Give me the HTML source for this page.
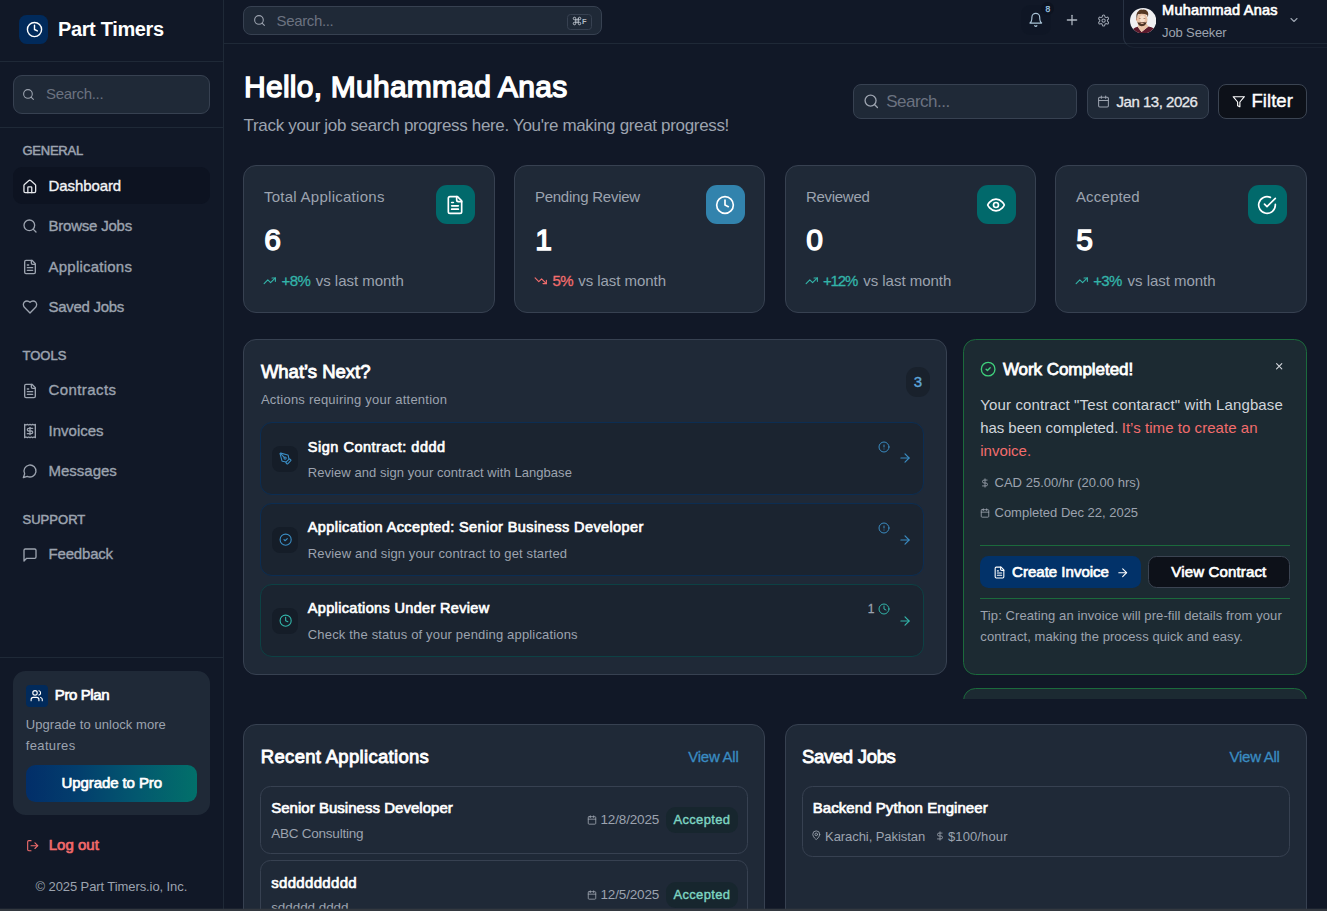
<!DOCTYPE html>
<html>
<head>
<meta charset="utf-8">
<title>Part Timers</title>
<style>
*{box-sizing:border-box;margin:0;padding:0}
html,body{width:1327px;height:911px;overflow:hidden;background:#111827;font-family:"Liberation Sans",sans-serif;color:#fff}
.abs{position:absolute}
.t{position:absolute;white-space:nowrap;line-height:1}
svg{display:block;position:absolute;fill:none;stroke:currentColor;stroke-width:2;stroke-linecap:round;stroke-linejoin:round}
#side{position:absolute;left:0;top:0;width:224px;height:911px;background:#111827;border-right:1px solid #1f2937}
.hr{position:absolute;height:1px;background:#1f2937}
.sec{position:absolute;left:23px;font-size:13px;font-weight:700;color:#9ca3af;letter-spacing:.4px;line-height:1;white-space:nowrap}
.nav{position:absolute;left:48px;font-size:15px;color:#9ca3af;line-height:1;white-space:nowrap;-webkit-text-stroke:.3px #9ca3af}
.nav.act{color:#f3f4f6;-webkit-text-stroke:.3px #f3f4f6}
.ni{left:23px;width:15px;height:15px;color:#9ca3af}
.inp{position:absolute;background:#1f2937;border:1px solid #374151;border-radius:8px}
.ph{position:absolute;color:#6b7280;white-space:nowrap;line-height:1}
.card{position:absolute;background:#1f2937;border:1px solid #374151;border-radius:13px}
#top{position:absolute;left:0;top:0;width:1327px;height:0}
#topline{position:absolute;left:224px;top:43px;width:1103px;height:1px;background:#1f2937}
/*CSS_MORE*/
</style>
</head>
<body>
<svg width="0" height="0" style="position:absolute"><defs>
<symbol id="i-clock" viewBox="0 0 24 24"><circle cx="12" cy="12" r="10"/><polyline points="12 6 12 12 16 14"/></symbol>
<symbol id="i-search" viewBox="0 0 24 24"><circle cx="11" cy="11" r="8"/><path d="m21 21-4.3-4.3"/></symbol>
<symbol id="i-home" viewBox="0 0 24 24"><path d="M15 21v-8a1 1 0 0 0-1-1h-4a1 1 0 0 0-1 1v8"/><path d="M3 10a2 2 0 0 1 .709-1.528l7-5.999a2 2 0 0 1 2.582 0l7 5.999A2 2 0 0 1 21 10v9a2 2 0 0 1-2 2H5a2 2 0 0 1-2-2z"/></symbol>
<symbol id="i-file" viewBox="0 0 24 24"><path d="M15 2H6a2 2 0 0 0-2 2v16a2 2 0 0 0 2 2h12a2 2 0 0 0 2-2V7Z"/><path d="M14 2v4a2 2 0 0 0 2 2h4"/><path d="M10 9H8"/><path d="M16 13H8"/><path d="M16 17H8"/></symbol>
<symbol id="i-heart" viewBox="0 0 24 24"><path d="M19 14c1.49-1.46 3-3.21 3-5.5A5.5 5.5 0 0 0 16.5 3c-1.76 0-3 .5-4.5 2-1.5-1.5-2.74-2-4.5-2A5.5 5.5 0 0 0 2 8.5c0 2.3 1.5 4.05 3 5.5l7 7Z"/></symbol>
<symbol id="i-receipt" viewBox="0 0 24 24"><path d="M4 2v20l2-1 2 1 2-1 2 1 2-1 2 1 2-1 2 1V2l-2 1-2-1-2 1-2-1-2 1-2-1-2 1Z"/><path d="M16 8h-6a2 2 0 1 0 0 4h4a2 2 0 1 1 0 4H8"/><path d="M12 17.5v-11"/></symbol>
<symbol id="i-msgc" viewBox="0 0 24 24"><path d="M7.9 20A9 9 0 1 0 4 16.1L2 22Z"/></symbol>
<symbol id="i-msgs" viewBox="0 0 24 24"><path d="M21 15a2 2 0 0 1-2 2H7l-4 4V5a2 2 0 0 1 2-2h14a2 2 0 0 1 2 2z"/></symbol>
<symbol id="i-users" viewBox="0 0 24 24"><path d="M16 21v-2a4 4 0 0 0-4-4H6a4 4 0 0 0-4 4v2"/><circle cx="9" cy="7" r="4"/><path d="M22 21v-2a4 4 0 0 0-3-3.87"/><path d="M16 3.13a4 4 0 0 1 0 7.75"/></symbol>
<symbol id="i-logout" viewBox="0 0 24 24"><path d="M9 21H5a2 2 0 0 1-2-2V5a2 2 0 0 1 2-2h4"/><polyline points="16 17 21 12 16 7"/><line x1="21" x2="9" y1="12" y2="12"/></symbol>
<symbol id="i-bell" viewBox="0 0 24 24"><path d="M6 8a6 6 0 0 1 12 0c0 7 3 9 3 9H3s3-2 3-9"/><path d="M10.3 21a1.94 1.94 0 0 0 3.4 0"/></symbol>
<symbol id="i-plus" viewBox="0 0 24 24"><path d="M5 12h14"/><path d="M12 5v14"/></symbol>
<symbol id="i-gear" viewBox="0 0 24 24"><path d="M12.22 2h-.44a2 2 0 0 0-2 2v.18a2 2 0 0 1-1 1.73l-.43.25a2 2 0 0 1-2 0l-.15-.08a2 2 0 0 0-2.73.73l-.22.38a2 2 0 0 0 .73 2.73l.15.1a2 2 0 0 1 1 1.72v.51a2 2 0 0 1-1 1.74l-.15.09a2 2 0 0 0-.73 2.73l.22.38a2 2 0 0 0 2.73.73l.15-.08a2 2 0 0 1 2 0l.43.25a2 2 0 0 1 1 1.73V20a2 2 0 0 0 2 2h.44a2 2 0 0 0 2-2v-.18a2 2 0 0 1 1-1.73l.43-.25a2 2 0 0 1 2 0l.15.08a2 2 0 0 0 2.73-.73l.22-.39a2 2 0 0 0-.73-2.73l-.15-.08a2 2 0 0 1-1-1.74v-.5a2 2 0 0 1 1-1.74l.15-.09a2 2 0 0 0 .73-2.73l-.22-.38a2 2 0 0 0-2.73-.73l-.15.08a2 2 0 0 1-2 0l-.43-.25a2 2 0 0 1-1-1.73V4a2 2 0 0 0-2-2z"/><circle cx="12" cy="12" r="3"/></symbol>
<symbol id="i-chev" viewBox="0 0 24 24"><path d="m6 9 6 6 6-6"/></symbol>
<symbol id="i-cal" viewBox="0 0 24 24"><path d="M8 2v4"/><path d="M16 2v4"/><rect width="18" height="18" x="3" y="4" rx="2"/><path d="M3 10h18"/></symbol>
<symbol id="i-filter" viewBox="0 0 24 24"><polygon points="22 3 2 3 10 12.46 10 19 14 21 14 12.46 22 3"/></symbol>
<symbol id="i-eye" viewBox="0 0 24 24"><path d="M2 12s3-7 10-7 10 7 10 7-3 7-10 7-10-7-10-7Z"/><circle cx="12" cy="12" r="3"/></symbol>
<symbol id="i-checkc" viewBox="0 0 24 24"><path d="M22 11.08V12a10 10 0 1 1-5.93-9.14"/><polyline points="22 4 12 14.01 9 11.01"/></symbol>
<symbol id="i-ccheck" viewBox="0 0 24 24"><circle cx="12" cy="12" r="10"/><path d="m9 12 2 2 4-4"/></symbol>
<symbol id="i-tup" viewBox="0 0 24 24"><polyline points="22 7 13.5 15.5 8.5 10.5 2 17"/><polyline points="16 7 22 7 22 13"/></symbol>
<symbol id="i-tdown" viewBox="0 0 24 24"><polyline points="22 17 13.5 8.5 8.5 13.5 2 7"/><polyline points="16 17 22 17 22 11"/></symbol>
<symbol id="i-pen" viewBox="0 0 24 24"><path d="M15.707 21.293a1 1 0 0 1-1.414 0l-1.586-1.586a1 1 0 0 1 0-1.414l5.586-5.586a1 1 0 0 1 1.414 0l1.586 1.586a1 1 0 0 1 0 1.414z"/><path d="m18 13-1.375-6.874a1 1 0 0 0-.746-.776L3.235 2.028a1 1 0 0 0-1.207 1.207L5.35 15.879a1 1 0 0 0 .776.746L13 18"/><path d="m2.3 2.3 7.286 7.286"/><circle cx="11" cy="11" r="2"/></symbol>
<symbol id="i-alert" viewBox="0 0 24 24"><circle cx="12" cy="12" r="10"/><line x1="12" x2="12" y1="8" y2="12"/><line x1="12" x2="12.01" y1="16" y2="16"/></symbol>
<symbol id="i-arrow" viewBox="0 0 24 24"><path d="M5 12h14"/><path d="m12 5 7 7-7 7"/></symbol>
<symbol id="i-x" viewBox="0 0 24 24"><path d="M18 6 6 18"/><path d="m6 6 12 12"/></symbol>
<symbol id="i-dollar" viewBox="0 0 24 24"><line x1="12" x2="12" y1="2" y2="22"/><path d="M17 5H9.5a3.5 3.5 0 0 0 0 7h5a3.5 3.5 0 0 1 0 7H6"/></symbol>
<symbol id="i-pin" viewBox="0 0 24 24"><path d="M20 10c0 6-8 12-8 12s-8-6-8-12a8 8 0 0 1 16 0Z"/><circle cx="12" cy="10" r="3"/></symbol>
<symbol id="i-cmd" viewBox="0 0 24 24"><path d="M15 6v12a3 3 0 1 0 3-3H6a3 3 0 1 0 3 3V6a3 3 0 1 0-3 3h12a3 3 0 1 0-3-3"/></symbol>
</defs></svg>
<div id="side">
<div class="abs" style="left:19px;top:15px;width:29px;height:29px;background:#012a5b;border-radius:7.5px;"></div>
<svg style="left:25.5px;top:20.5px;width:17px;height:17px;color:#fff;stroke-width:2;"><use href="#i-clock"/></svg>
<div class="t" style="left:57.9px;top:19px;font-size:20px;color:#fff;font-weight:700;letter-spacing:-0.34px;">Part Timers</div>
<div class="hr" style="left:0;top:61px;width:223px"></div>
<div class="inp" style="left:13px;top:75px;width:197px;height:38.6px;border-radius:9px"></div>
<svg style="left:22.0px;top:87.7px;width:13px;height:13px;color:#9ca3af;stroke-width:2;"><use href="#i-search"/></svg>
<div class="t" style="left:46px;top:86px;font-size:15px;color:#6b7280;letter-spacing:-0.31px;">Search...</div>
<div class="hr" style="left:0;top:127px;width:223px"></div>
<div class="t" style="left:22.5px;top:144px;font-size:13px;color:#9ca3af;letter-spacing:-0.25px;-webkit-text-stroke:0.5px #9ca3af;">GENERAL</div>
<div class="abs" style="left:13px;top:167px;width:197px;height:37px;background:#0d1321;border-radius:9px;"></div>
<svg style="left:22.2px;top:178.5px;width:15.6px;height:15.6px;color:#e5e7eb;stroke-width:2;"><use href="#i-home"/></svg>
<div class="t" style="left:48.5px;top:178px;font-size:15px;color:#f3f4f6;letter-spacing:-0.09px;-webkit-text-stroke:0.35px #f3f4f6;">Dashboard</div>
<svg style="left:22.0px;top:218.0px;width:16px;height:16px;color:#9ca3af;stroke-width:2;"><use href="#i-search"/></svg>
<div class="t" style="left:48.5px;top:218px;font-size:15px;color:#9ca3af;letter-spacing:-0.22px;-webkit-text-stroke:0.35px #9ca3af;">Browse Jobs</div>
<svg style="left:22.0px;top:259.0px;width:16px;height:16px;color:#9ca3af;stroke-width:2;"><use href="#i-file"/></svg>
<div class="t" style="left:48.5px;top:259px;font-size:15px;color:#9ca3af;letter-spacing:0.23px;-webkit-text-stroke:0.35px #9ca3af;">Applications</div>
<svg style="left:22.0px;top:299.0px;width:16px;height:16px;color:#9ca3af;stroke-width:2;"><use href="#i-heart"/></svg>
<div class="t" style="left:48.5px;top:299px;font-size:15px;color:#9ca3af;letter-spacing:-0.29px;-webkit-text-stroke:0.35px #9ca3af;">Saved Jobs</div>
<div class="t" style="left:22.5px;top:349px;font-size:13px;color:#9ca3af;letter-spacing:0.01px;-webkit-text-stroke:0.5px #9ca3af;">TOOLS</div>
<svg style="left:22.0px;top:382.8px;width:16px;height:16px;color:#9ca3af;stroke-width:2;"><use href="#i-file"/></svg>
<div class="t" style="left:48.5px;top:382px;font-size:15px;color:#9ca3af;letter-spacing:0.41px;-webkit-text-stroke:0.35px #9ca3af;">Contracts</div>
<svg style="left:22.0px;top:423.0px;width:16px;height:16px;color:#9ca3af;stroke-width:2;"><use href="#i-receipt"/></svg>
<div class="t" style="left:48.5px;top:423px;font-size:15px;color:#9ca3af;letter-spacing:0.01px;-webkit-text-stroke:0.35px #9ca3af;">Invoices</div>
<svg style="left:22.0px;top:463.0px;width:16px;height:16px;color:#9ca3af;stroke-width:2;"><use href="#i-msgc"/></svg>
<div class="t" style="left:48.5px;top:463px;font-size:15px;color:#9ca3af;-webkit-text-stroke:0.35px #9ca3af;">Messages</div>
<div class="t" style="left:22.5px;top:513px;font-size:13px;color:#9ca3af;letter-spacing:0.03px;-webkit-text-stroke:0.5px #9ca3af;">SUPPORT</div>
<svg style="left:22.0px;top:546.9px;width:16px;height:16px;color:#9ca3af;stroke-width:2;"><use href="#i-msgs"/></svg>
<div class="t" style="left:48.5px;top:546px;font-size:15px;color:#9ca3af;letter-spacing:-0.18px;-webkit-text-stroke:0.35px #9ca3af;">Feedback</div>
<div class="hr" style="left:0;top:657px;width:223px"></div>
<div class="abs" style="left:13px;top:671px;width:197px;height:144px;background:#1f2937;border-radius:12.5px;"></div>
<div class="abs" style="left:26px;top:685px;width:22.3px;height:22px;background:#012a5b;border-radius:4px;"></div>
<svg style="left:29.6px;top:689.0px;width:13.4px;height:13.4px;color:#fff;stroke-width:2;"><use href="#i-users"/></svg>
<div class="t" style="left:54.8px;top:687px;font-size:15px;color:#fff;letter-spacing:-0.39px;-webkit-text-stroke:0.69px #fff;">Pro Plan</div>
<div class="t" style="left:25.8px;top:718px;font-size:13px;color:#9ca3af;letter-spacing:0.06px;">Upgrade to unlock more</div>
<div class="t" style="left:25.8px;top:739px;font-size:13px;color:#9ca3af;letter-spacing:0.34px;">features</div>
<div class="abs" style="left:26px;top:765px;width:171px;height:37px;border-radius:9.5px;background:linear-gradient(90deg,#022e69 0%,#033e6d 30%,#03586f 65%,#02706a 100%);"></div>
<div class="t" style="left:61.5px;top:775px;font-size:15px;color:#fff;letter-spacing:-0.09px;-webkit-text-stroke:0.69px #fff;">Upgrade to Pro</div>
<svg style="left:25.8px;top:838.7px;width:13.4px;height:13.4px;color:#f26d6d;stroke-width:2;"><use href="#i-logout"/></svg>
<div class="t" style="left:48.7px;top:837px;font-size:15px;color:#f26a6a;letter-spacing:0.01px;-webkit-text-stroke:0.69px #f26a6a;">Log out</div>
<div class="t" style="left:35.5px;top:880px;font-size:13px;color:#9ca3af;letter-spacing:-0.09px;">© 2025 Part Timers.io, Inc.</div>
</div>
<div id="topline"></div>
<div id="top">
<div class="inp" style="left:243px;top:6px;width:359px;height:29px"></div>
<svg style="left:252.9px;top:13.9px;width:13px;height:13px;color:#9ca3af;stroke-width:2;"><use href="#i-search"/></svg>
<div class="t" style="left:276.6px;top:13px;font-size:15px;color:#6b7280;letter-spacing:-0.36px;">Search...</div>
<div class="abs" style="left:567.2px;top:14px;width:24.8px;height:16px;border:1px solid #374151;border-radius:3.5px;"></div>
<svg style="left:572.1px;top:16.1px;width:10px;height:10px;color:#c3cad3;stroke-width:2.2;"><use href="#i-cmd"/></svg>
<div class="t" style="left:582px;top:18px;font-size:7.5px;color:#b4bac3;font-weight:700;">F</div>
<div class="abs" style="left:1020.8px;top:4.6px;width:30.7px;height:30.2px;background:#0f1524;border-radius:9px;opacity:.55;"></div>
<svg style="left:1028.2px;top:12.2px;width:15.6px;height:15.6px;color:#a9c3d6;stroke-width:1.8;"><use href="#i-bell"/></svg>
<div class="abs" style="left:1041.3px;top:2.1px;width:13.2px;height:13.2px;background:#0d1320;border-radius:6.6px;"></div>
<div class="t" style="left:1045.5px;top:5px;font-size:8.5px;color:#a3cfe8;-webkit-text-stroke:0.25px #a3cfe8;">8</div>
<svg style="left:1064.1px;top:11.9px;width:16px;height:16px;color:#aeb6c1;stroke-width:1.9;"><use href="#i-plus"/></svg>
<svg style="left:1096.9px;top:13.7px;width:13.2px;height:13.2px;color:#9ca3af;stroke-width:1.9;"><use href="#i-gear"/></svg>
<div class="abs" style="left:1123px;top:-2px;width:210px;height:49.5px;border-left:1px solid #283243;border-bottom:1px solid #192130;border-bottom-left-radius:11px"></div>
<svg style="left:1129.8px;top:7.5px;width:26.3px;height:25.6px;stroke:none" viewBox="0 0 26 26" preserveAspectRatio="none"><defs><clipPath id="av"><circle cx="13" cy="13" r="13"/></clipPath></defs><g clip-path="url(#av)"><rect width="26" height="26" fill="#f0f0f2"/><path d="M2.5 27L3.4 21.2Q5 19.600 7.600 19L11.400 24.300L18.200 18.700Q21.500 19.400 23.600 20.800L25 27z" fill="#5c1a2c"/><path d="M7.600 19.100L8.300 16h8.200l1.700 2.700L11.400 24.400z" fill="#e8c3a6"/><ellipse cx="11.900" cy="11.900" rx="5.400" ry="6.600" fill="#e9c2a6"/><ellipse cx="12.300" cy="11" rx="2.600" ry="3.600" fill="#f6dfcc"/><path d="M6.500 11.200Q5.600 5.200 8.200 3.200Q9.600 1.200 12 1.700Q15.800 1 17.300 3.600Q18.600 5.200 17.600 9.500L17 7.200Q13 5.200 7.800 6.400Q7 8 6.900 11.200z" fill="#553722"/><path d="M7.400 13.600Q7.800 17.400 10.400 18.300Q12 18.700 14 18.100Q16.200 16.900 16.600 13.400Q15.600 15.200 14.400 14.600Q12 13.800 9.800 14.700Q8.200 15.200 7.400 13.600z" fill="#4b3426"/><ellipse cx="12" cy="15.600" rx="1.700" ry=".75" fill="#e2b49c"/><ellipse cx="9.700" cy="10.800" rx="1.100" ry=".5" fill="#8a5d49"/><ellipse cx="14.200" cy="10.800" rx="1.100" ry=".5" fill="#8a5d49"/><ellipse cx="6.500" cy="11.800" rx=".6" ry="1.100" fill="#c98a72"/></g></svg>
<div class="t" style="left:1162.1px;top:3px;font-size:14.5px;color:#fff;letter-spacing:0.21px;-webkit-text-stroke:0.67px #fff;">Muhammad Anas</div>
<div class="t" style="left:1162.1px;top:26px;font-size:13px;color:#9ca3af;letter-spacing:-0.14px;">Job Seeker</div>
<svg style="left:1288.4px;top:14.3px;width:12px;height:12px;color:#9ca3af;stroke-width:2.2;"><use href="#i-chev"/></svg>
</div>
<div id="main">
<div class="t" style="left:244.1px;top:72px;font-size:30px;color:#fff;letter-spacing:0.24px;-webkit-text-stroke:1.38px #fff;">Hello, Muhammad Anas</div>
<div class="t" style="left:243.6px;top:117px;font-size:17px;color:#9ca3af;letter-spacing:-0.33px;">Track your job search progress here. You're making great progress!</div>
<div class="inp" style="left:853px;top:84px;width:224px;height:35px"></div>
<svg style="left:862.95px;top:93.15px;width:16.5px;height:16.5px;color:#9ca3af;stroke-width:1.9;"><use href="#i-search"/></svg>
<div class="t" style="left:886.2px;top:93px;font-size:17px;color:#6b7280;letter-spacing:-0.5px;">Search...</div>
<div class="inp" style="left:1087px;top:84px;width:122px;height:35px"></div>
<svg style="left:1097.0px;top:94.7px;width:13px;height:13px;color:#9ca3af;stroke-width:1.9;"><use href="#i-cal"/></svg>
<div class="t" style="left:1116.5px;top:94px;font-size:15px;color:#e5e7eb;letter-spacing:-0.48px;-webkit-text-stroke:0.3px #e5e7eb;">Jan 13, 2026</div>
<div class="abs" style="left:1218px;top:84px;width:89px;height:35px;background:#0d1119;border:1px solid #3b4452;border-radius:8px;"></div>
<svg style="left:1231.65px;top:94.65px;width:13.5px;height:13.5px;color:#fff;stroke-width:2;"><use href="#i-filter"/></svg>
<div class="t" style="left:1251.5px;top:92px;font-size:18.5px;color:#fff;letter-spacing:0.05px;-webkit-text-stroke:0.4px #fff;">Filter</div>
<div class="card" style="left:243px;top:165px;width:252px;height:148px"></div>
<div class="t" style="left:263.9px;top:189px;font-size:15px;color:#9ca3af;letter-spacing:0.27px;">Total Applications</div>
<div class="t" style="left:264.3px;top:225px;font-size:30px;color:#fff;letter-spacing:-0.19px;-webkit-text-stroke:1.38px #fff;">6</div>
<svg style="left:262.95px;top:273.95px;width:13.5px;height:13.5px;color:#33b4a9;stroke-width:2;"><use href="#i-tup"/></svg>
<div class="t" style="left:281.5px;top:273px;font-size:15px;color:#33b4a9;letter-spacing:-0.61px;-webkit-text-stroke:0.3px #33b4a9;">+8%</div>
<div class="t" style="left:315.8px;top:273px;font-size:15px;color:#9ca3af;letter-spacing:-0.03px;">vs last month</div>
<div class="abs" style="left:436.1px;top:185px;width:38.6px;height:39px;background:#01696b;border-radius:11px;"></div>
<svg style="left:445.4px;top:194.6px;width:20px;height:20px;color:#fff;stroke-width:2;"><use href="#i-file"/></svg>
<div class="card" style="left:514px;top:165px;width:251px;height:148px"></div>
<div class="t" style="left:534.9px;top:189px;font-size:15px;color:#9ca3af;letter-spacing:-0.24px;">Pending Review</div>
<div class="t" style="left:535.3px;top:225px;font-size:30px;color:#fff;letter-spacing:-6.19px;-webkit-text-stroke:1.38px #fff;">1</div>
<svg style="left:533.95px;top:273.95px;width:13.5px;height:13.5px;color:#f26d6d;stroke-width:2;"><use href="#i-tdown"/></svg>
<div class="t" style="left:552.5px;top:273px;font-size:15px;color:#f26d6d;letter-spacing:-0.69px;-webkit-text-stroke:0.3px #f26d6d;">5%</div>
<div class="t" style="left:578.2px;top:273px;font-size:15px;color:#9ca3af;letter-spacing:-0.04px;">vs last month</div>
<div class="abs" style="left:706.1px;top:185px;width:38.6px;height:39px;background:#3283ad;border-radius:11px;"></div>
<svg style="left:715.4px;top:194.6px;width:20px;height:20px;color:#fff;stroke-width:2;"><use href="#i-clock"/></svg>
<div class="card" style="left:785px;top:165px;width:251px;height:148px"></div>
<div class="t" style="left:805.9px;top:189px;font-size:15px;color:#9ca3af;letter-spacing:-0.28px;">Reviewed</div>
<div class="t" style="left:806.3px;top:225px;font-size:30px;color:#fff;letter-spacing:-0.09px;-webkit-text-stroke:1.38px #fff;">0</div>
<svg style="left:804.95px;top:273.95px;width:13.5px;height:13.5px;color:#33b4a9;stroke-width:2;"><use href="#i-tup"/></svg>
<div class="t" style="left:822.9px;top:273px;font-size:15px;color:#33b4a9;letter-spacing:-1.1px;-webkit-text-stroke:0.3px #33b4a9;">+12%</div>
<div class="t" style="left:863.2px;top:273px;font-size:15px;color:#9ca3af;letter-spacing:-0.02px;">vs last month</div>
<div class="abs" style="left:977.1px;top:185px;width:38.6px;height:39px;background:#01696b;border-radius:11px;"></div>
<svg style="left:986.4px;top:194.6px;width:20px;height:20px;color:#fff;stroke-width:2;"><use href="#i-eye"/></svg>
<div class="card" style="left:1055px;top:165px;width:252px;height:148px"></div>
<div class="t" style="left:1075.9px;top:189px;font-size:15px;color:#9ca3af;letter-spacing:0.17px;">Accepted</div>
<div class="t" style="left:1076.3px;top:225px;font-size:30px;color:#fff;letter-spacing:-1.49px;-webkit-text-stroke:1.38px #fff;">5</div>
<svg style="left:1074.95px;top:273.95px;width:13.5px;height:13.5px;color:#33b4a9;stroke-width:2;"><use href="#i-tup"/></svg>
<div class="t" style="left:1093.2px;top:273px;font-size:15px;color:#33b4a9;letter-spacing:-0.65px;-webkit-text-stroke:0.3px #33b4a9;">+3%</div>
<div class="t" style="left:1127.6px;top:273px;font-size:15px;color:#9ca3af;letter-spacing:-0.04px;">vs last month</div>
<div class="abs" style="left:1248.1px;top:185px;width:38.6px;height:39px;background:#01696b;border-radius:11px;"></div>
<svg style="left:1257.4px;top:194.6px;width:20px;height:20px;color:#fff;stroke-width:2;"><use href="#i-checkc"/></svg>
<div class="card" style="left:243px;top:339px;width:704px;height:335.5px"></div>
<div class="t" style="left:260.9px;top:363px;font-size:18.5px;color:#fff;letter-spacing:-0.01px;-webkit-text-stroke:0.85px #fff;">What’s Next?</div>
<div class="t" style="left:260.9px;top:393px;font-size:13px;color:#9ca3af;letter-spacing:0.22px;">Actions requiring your attention</div>
<div class="abs" style="left:905.8px;top:366.8px;width:24.2px;height:30.7px;background:#19212c;border-radius:11px;"></div>
<div class="t" style="left:913.8px;top:374px;font-size:15px;color:#5fa6da;letter-spacing:-0.34px;-webkit-text-stroke:0.4px #5fa6da;">3</div>
<div class="abs" style="left:260.2px;top:422.1px;width:663.6px;height:72.9px;background:#1b2430;border:1px solid #0c2d52;border-radius:12px;"></div>
<div class="abs" style="left:272.1px;top:445.90000000000003px;width:25.7px;height:25.9px;background:#151d28;border-radius:8px;"></div>
<svg style="left:278.55px;top:451.65px;width:13.3px;height:13.3px;color:#3a8cc2;stroke-width:2;"><use href="#i-pen"/></svg>
<div class="t" style="left:307.8px;top:440px;font-size:14.5px;color:#fff;letter-spacing:0.51px;-webkit-text-stroke:0.67px #fff;">Sign Contract: dddd</div>
<div class="t" style="left:307.8px;top:466px;font-size:13px;color:#9ca3af;letter-spacing:0.06px;">Review and sign your contract with Langbase</div>
<svg style="left:877.6px;top:440.7px;width:12px;height:12px;color:#3a8cc2;stroke-width:2;"><use href="#i-alert"/></svg>
<svg style="left:898.3px;top:451.4px;width:14px;height:14px;color:#3a8cc2;stroke-width:2;"><use href="#i-arrow"/></svg>
<div class="abs" style="left:260.2px;top:503.2px;width:663.6px;height:72.4px;background:#1b2430;border:1px solid #0c2d52;border-radius:12px;"></div>
<div class="abs" style="left:272.1px;top:527.0px;width:25.7px;height:25.9px;background:#151d28;border-radius:8px;"></div>
<svg style="left:278.55px;top:532.75px;width:13.3px;height:13.3px;color:#3a8cc2;stroke-width:2;"><use href="#i-ccheck"/></svg>
<div class="t" style="left:307.8px;top:520px;font-size:14.5px;color:#fff;letter-spacing:0.39px;-webkit-text-stroke:0.67px #fff;">Application Accepted: Senior Business Developer</div>
<div class="t" style="left:307.8px;top:547px;font-size:13px;color:#9ca3af;letter-spacing:0.13px;">Review and sign your contract to get started</div>
<svg style="left:877.6px;top:521.8px;width:12px;height:12px;color:#3a8cc2;stroke-width:2;"><use href="#i-alert"/></svg>
<svg style="left:898.3px;top:532.5px;width:14px;height:14px;color:#3a8cc2;stroke-width:2;"><use href="#i-arrow"/></svg>
<div class="abs" style="left:260.2px;top:584.3px;width:663.6px;height:72.4px;background:#1b2430;border:1px solid #0d4144;border-radius:12px;"></div>
<div class="abs" style="left:272.1px;top:608.0999999999999px;width:25.7px;height:25.9px;background:#151d28;border-radius:8px;"></div>
<svg style="left:278.55px;top:613.85px;width:13.3px;height:13.3px;color:#33b4a9;stroke-width:2;"><use href="#i-clock"/></svg>
<div class="t" style="left:307.8px;top:601px;font-size:14.5px;color:#fff;letter-spacing:0.34px;-webkit-text-stroke:0.67px #fff;">Applications Under Review</div>
<div class="t" style="left:307.8px;top:628px;font-size:13px;color:#9ca3af;letter-spacing:0.17px;">Check the status of your pending applications</div>
<div class="t" style="left:867.8px;top:603px;font-size:12px;color:#9ca3af;letter-spacing:-1.67px;-webkit-text-stroke:0.3px #9ca3af;">1</div>
<svg style="left:877.6px;top:602.9px;width:12px;height:12px;color:#33b4a9;stroke-width:2;"><use href="#i-clock"/></svg>
<svg style="left:898.3px;top:613.6px;width:14px;height:14px;color:#33b4a9;stroke-width:2;"><use href="#i-arrow"/></svg>
<div class="abs" style="left:963px;top:339px;width:344px;height:359.7px;overflow:hidden"><div class="abs" style="left:0;top:0;width:344px;height:335.8px;background:#1c2a32;border:1px solid #1b6a3c;border-radius:12.5px"></div><div class="abs" style="left:0;top:349px;width:344px;height:100px;background:#1c2a32;border:1px solid #1b6a3c;border-radius:12.5px"></div></div>
<svg style="left:979.85px;top:361.05px;width:16.3px;height:16.3px;color:#3fce7b;stroke-width:2;"><use href="#i-ccheck"/></svg>
<div class="t" style="left:1002.9px;top:361px;font-size:17px;color:#fff;letter-spacing:-0.05px;-webkit-text-stroke:0.78px #fff;">Work Completed!</div>
<svg style="left:1273.6px;top:361.1px;width:10.4px;height:10.4px;color:#d1d5db;stroke-width:2.6;"><use href="#i-x"/></svg>
<div class="t" style="left:980.3px;top:397px;font-size:15px;color:#d1d5db;letter-spacing:0.13px;">Your contract "Test contaract" with Langbase</div>
<div class="t" style="left:980.3px;top:420px;font-size:15px;color:#d1d5db;letter-spacing:-0.07px;">has been completed.</div>
<div class="t" style="left:1121.7px;top:420px;font-size:15px;color:#f26d6d;letter-spacing:0.05px;">It’s time to create an</div>
<div class="t" style="left:980.3px;top:443px;font-size:15px;color:#f26d6d;letter-spacing:-0.01px;">invoice.</div>
<svg style="left:979.7px;top:477.9px;width:10px;height:10px;color:#9ca3af;stroke-width:2;"><use href="#i-dollar"/></svg>
<div class="t" style="left:994.5px;top:476px;font-size:13px;color:#9ca3af;letter-spacing:0.02px;">CAD 25.00/hr (20.00 hrs)</div>
<svg style="left:979.8px;top:507.8px;width:10px;height:10px;color:#9ca3af;stroke-width:2;"><use href="#i-cal"/></svg>
<div class="t" style="left:994.5px;top:506px;font-size:13px;color:#9ca3af;letter-spacing:-0.01px;">Completed Dec 22, 2025</div>
<div class="abs" style="left:980.3px;top:545px;width:309.6px;height:1px;background:#1b6a3c;"></div>
<div class="abs" style="left:980.3px;top:556.3px;width:160.7px;height:31.5px;background:#023269;border-radius:8.5px;"></div>
<svg style="left:992.8px;top:566.2px;width:13px;height:13px;color:#fff;stroke-width:2;"><use href="#i-file"/></svg>
<div class="t" style="left:1012.1px;top:564px;font-size:15px;color:#fff;letter-spacing:0.01px;-webkit-text-stroke:0.69px #fff;">Create Invoice</div>
<svg style="left:1116.0px;top:565.9px;width:13.4px;height:13.4px;color:#fff;stroke-width:2;"><use href="#i-arrow"/></svg>
<div class="abs" style="left:1148.3px;top:556.3px;width:141.6px;height:31.5px;background:#0d1119;border:1px solid #3b4452;border-radius:8.5px;"></div>
<div class="t" style="left:1171.3px;top:564px;font-size:15px;color:#fff;letter-spacing:0.15px;-webkit-text-stroke:0.69px #fff;">View Contract</div>
<div class="abs" style="left:980.3px;top:598px;width:309.6px;height:1px;background:#1b6a3c;"></div>
<div class="t" style="left:980.3px;top:609px;font-size:13px;color:#9ca3af;letter-spacing:0.09px;">Tip: Creating an invoice will pre-fill details from your</div>
<div class="t" style="left:980.3px;top:630px;font-size:13px;color:#9ca3af;letter-spacing:0.08px;">contract, making the process quick and easy.</div>
<div class="card" style="left:243px;top:724px;width:522px;height:220px"></div>
<div class="t" style="left:260.8px;top:748px;font-size:18.5px;color:#fff;letter-spacing:0.31px;-webkit-text-stroke:0.85px #fff;">Recent Applications</div>
<div class="t" style="left:688.2px;top:749px;font-size:15px;color:#3a8cc2;letter-spacing:-0.24px;-webkit-text-stroke:0.3px #3a8cc2;">View All</div>
<div class="abs" style="left:260.2px;top:786.2px;width:487.5px;height:67.9px;border:1px solid #374151;border-radius:10.5px;"></div>
<div class="t" style="left:271.2px;top:800px;font-size:15px;color:#fff;letter-spacing:0.03px;-webkit-text-stroke:0.69px #fff;">Senior Business Developer</div>
<div class="t" style="left:271.2px;top:827px;font-size:13.5px;color:#9ca3af;letter-spacing:-0.23px;">ABC Consulting</div>
<svg style="left:586.8px;top:814.6px;width:10px;height:10px;color:#9ca3af;stroke-width:2;"><use href="#i-cal"/></svg>
<div class="t" style="left:600.5px;top:813px;font-size:13.5px;color:#9ca3af;letter-spacing:-0.16px;">12/8/2025</div>
<div class="abs" style="left:666.2px;top:807.1px;width:71.5px;height:25.7px;background:#17262e;border-radius:9.5px;"></div>
<div class="t" style="left:673.4px;top:813px;font-size:13px;color:#7ed5c3;letter-spacing:0.34px;-webkit-text-stroke:0.4px #7ed5c3;">Accepted</div>
<div class="abs" style="left:260.2px;top:860.3px;width:487.5px;height:67.9px;border:1px solid #374151;border-radius:10.5px;"></div>
<div class="t" style="left:271.2px;top:875px;font-size:15px;color:#fff;letter-spacing:0.32px;-webkit-text-stroke:0.69px #fff;">sddddddddd</div>
<div class="t" style="left:271.2px;top:901px;font-size:13.5px;color:#9ca3af;letter-spacing:-0.07px;">sddddd dddd</div>
<svg style="left:586.8px;top:889.6px;width:10px;height:10px;color:#9ca3af;stroke-width:2;"><use href="#i-cal"/></svg>
<div class="t" style="left:600.5px;top:888px;font-size:13.5px;color:#9ca3af;letter-spacing:-0.16px;">12/5/2025</div>
<div class="abs" style="left:666.2px;top:882.0999999999999px;width:71.5px;height:25.7px;background:#17262e;border-radius:9.5px;"></div>
<div class="t" style="left:673.4px;top:888px;font-size:13px;color:#7ed5c3;letter-spacing:0.34px;-webkit-text-stroke:0.4px #7ed5c3;">Accepted</div>
<div class="card" style="left:785.3px;top:724px;width:521.7px;height:220px"></div>
<div class="t" style="left:801.9px;top:748px;font-size:18.5px;color:#fff;letter-spacing:-0.3px;-webkit-text-stroke:0.85px #fff;">Saved Jobs</div>
<div class="t" style="left:1229.6px;top:749px;font-size:15px;color:#3a8cc2;letter-spacing:-0.28px;-webkit-text-stroke:0.3px #3a8cc2;">View All</div>
<div class="abs" style="left:802.1px;top:786.4px;width:487.7px;height:70.2px;border:1px solid #374151;border-radius:10.5px;"></div>
<div class="t" style="left:812.7px;top:800px;font-size:15px;color:#fff;letter-spacing:0.07px;-webkit-text-stroke:0.69px #fff;">Backend Python Engineer</div>
<svg style="left:811.45px;top:830.35px;width:10.5px;height:10.5px;color:#9ca3af;stroke-width:2;"><use href="#i-pin"/></svg>
<div class="t" style="left:825.1px;top:830px;font-size:13px;color:#9ca3af;letter-spacing:-0.07px;">Karachi, Pakistan</div>
<svg style="left:934.8px;top:830.8px;width:10px;height:10px;color:#9ca3af;stroke-width:2;"><use href="#i-dollar"/></svg>
<div class="t" style="left:947.9px;top:830px;font-size:13px;color:#9ca3af;letter-spacing:0.14px;">$100/hour</div>
</div>
<div class="abs" style="left:0;top:909px;width:1327px;height:2px;background:#33383f"></div><div class="abs" style="left:0;top:908px;width:1327px;height:1px;background:#33383f;opacity:.3"></div>
</body>
</html>
